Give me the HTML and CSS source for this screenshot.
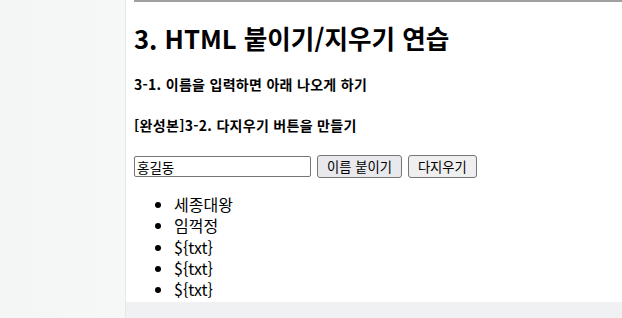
FILE: index.html
```html
<!DOCTYPE html>
<html lang="ko">
<head>
  <meta charset="UTF-8">
  <title>HTML 붙이기/지우기 연습</title>
  <link rel="stylesheet" href="styles.css">
</head>
<body>
  <div class="side"></div>
  <div class="frame">
    <div class="page">
      <hr class="top-line">
      <h1>3. HTML 붙이기/지우기 연습</h1>
      <h5>3-1. 이름을 입력하면 아래 나오게 하기</h5>
      <h5>[완성본]3-2. 다지우기 버튼을 만들기</h5>
      <div class="form-row">
        <input type="text" id="name" value="홍길동">
        <button class="btn" onclick="addName()">이름 붙이기</button>
        <button class="btn" onclick="clearNames()">다지우기</button>
      </div>
      <ul id="names">
        <li>세종대왕</li>
        <li>임꺽정</li>
        <li>${txt}</li>
        <li>${txt}</li>
        <li>${txt}</li>
      </ul>
    </div>
    <div class="frame-bottom"></div>
  </div>

<script>
  function addName() {
    let txt = document.getElementById('name').value;
    let temp_html = `<li>${txt}</li>`;
    document.getElementById('names').insertAdjacentHTML('beforeend', temp_html);
  }

  function clearNames() {
    document.getElementById('names').innerHTML = '';
  }
</script>
</body>
</html>
```

FILE: styles.css
```css
html, body {
  height: 100%;
}
body {
  margin: 0;
  display: flex;
  font-family: 'Malgun Gothic', 'Noto Sans CJK KR', 'Noto Sans', sans-serif;
  color: #000;
  overflow: hidden;
}
.side {
  width: 125px;
  flex: none;
  background: linear-gradient(90deg, #f4f6f6, #f6f7f7);
  border-right: 1px solid #e6e8e8;
}
.frame {
  flex: 1;
  display: flex;
  flex-direction: column;
}
.page {
  height: 302px;
  background: #fff;
  padding: 0 0 0 8px;
  box-sizing: border-box;
  overflow: hidden;
}
.frame-bottom {
  flex: 1;
  background: #f0f1f2;
}
.top-line {
  margin: 0;
  border: none;
  border-top: 2px solid #a0a0a0;
}
h1 {
  font-size: 25.6px;
  margin: 19px 0 0;
  line-height: 34px;
}
h5 {
  font-size: 14px;
  letter-spacing: 0.3px;
  margin: 20px 0 0;
  line-height: 18px;
}
h5 + h5 {
  margin-top: 23px;
}
.form-row {
  margin-top: 21px;
  display: flex;
  align-items: center;
}
.form-row input {
  width: 177px;
  height: 21px;
  box-sizing: border-box;
  border: 1px solid #767676;
  border-radius: 2px;
  padding: 1px 2px;
  font-family: inherit;
  font-size: 13.5px;
}
.btn {
  margin-left: 6px;
  height: 23px;
  padding: 0 9px;
  border: 1px solid #767676;
  border-radius: 3px;
  background: #efefef;
  font-family: inherit;
  font-size: 13.3px;
}
.btn:first-of-type {
  background: #e9e9ed;
}
ul {
  margin: 16px 0 0;
  padding-left: 40px;
  font-size: 16px;
  line-height: 21.3px;
}
```
